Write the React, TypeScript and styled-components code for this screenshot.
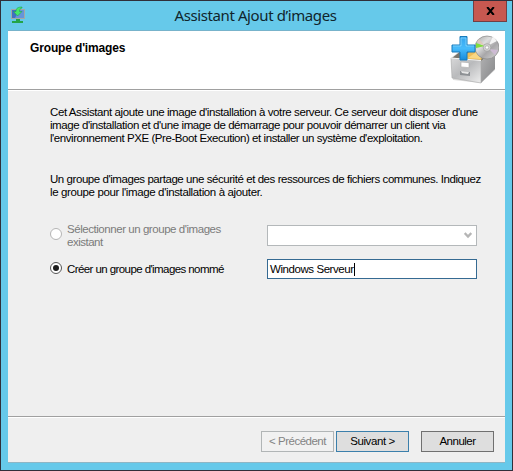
import React from 'react';
import styled, { createGlobalStyle } from 'styled-components';

const GlobalStyle = createGlobalStyle`
  * { box-sizing: border-box; }
  body { margin: 0; overflow: hidden; }
`;

const Window = styled.div`
  width: 513px;
  height: 471px;
  display: flex;
  flex-direction: column;
  padding: 0 7px 7px;
  border: 1px solid #302f3a;
  background: #66c9ea;
  font-family: 'Liberation Sans', Arial, sans-serif;
  font-size: 11.5px;
  line-height: 13px;
  color: #000;
`;

const TitleBar = styled.header`
  height: 29px;
  flex: none;
  display: grid;
  grid-template-columns: 33px 1fr 33px;
  margin-right: -1px;
`;

const TitleIcon = styled.svg`
  margin: 5px 0 0 2px;
`;

const Title = styled.h1`
  margin: 3px 3px 0 0;
  text-align: center;
  font: 400 15px/22px 'Noto Sans', 'Open Sans', sans-serif;
  letter-spacing: -0.4px;
  color: #10252c;
`;

const CloseButton = styled.button`
  width: 34px;
  height: 21px;
  padding: 0;
  display: grid;
  place-items: center;
  border: 1px solid #713f44;
  border-top: 0;
  background: #c75850;
`;

const Client = styled.main`
  flex: 1;
  display: flex;
  flex-direction: column;
  border-top: 1px solid #77b3cb;
  border-bottom: 1px solid #8fb6c5;
  background: #efefef;
`;

const Banner = styled.section`
  height: 60px;
  flex: none;
  display: flex;
  justify-content: space-between;
  padding: 3px 6px 0 22px;
  background: #fff;
  border-bottom: 1px solid #fff;
  box-shadow: inset 0 -1px #a0a0a0;
`;

const Heading = styled.h2`
  margin: 8px 0 0;
  font-size: 12px;
  line-height: 13px;
  font-weight: 700;
  letter-spacing: -0.15px;
`;

const Body = styled.section`
  height: 325px;
  flex: none;
  padding: 15px 27px 0 42px;
`;

const Paragraph = styled.p<{ $gap: number }>`
  margin: 0 0 ${p => p.$gap}px;
`;

const Line = styled.span<{ $track?: number }>`
  display: block;
  white-space: nowrap;
  letter-spacing: ${p => p.$track ?? 0}px;
`;

const OptionRow = styled.div<{ $height: number }>`
  height: ${p => p.$height}px;
  display: grid;
  grid-template-columns: 17px 200px 210px;
  align-items: start;
`;

const Radio = styled.span<{ $checked?: boolean; $top: number }>`
  width: 12px;
  height: 12px;
  margin-top: ${p => p.$top}px;
  display: grid;
  place-items: center;
  border: 1px solid ${p => (p.$checked ? '#555' : '#b5b5b5')};
  border-radius: 50%;
  background: #fff;
  &::after {
    content: '';
    width: 6px;
    height: 6px;
    border-radius: 50%;
    background: ${p => (p.$checked ? '#1c1c1c' : 'transparent')};
  }
`;

const OptionLabel = styled.label<{ $disabled?: boolean; $top: number }>`
  margin-top: ${p => p.$top}px;
  color: ${p => (p.$disabled ? '#7b7b7b' : '#000')};
`;

const Combo = styled.div`
  height: 21px;
  display: flex;
  justify-content: flex-end;
  align-items: center;
  padding: 0 4px;
  border: 1px solid #b4b8ba;
  background: #fff;
`;

const Field = styled.div`
  height: 20px;
  display: flex;
  align-items: center;
  padding: 0 2px;
  border: 1px solid #356a92;
  background: #fff;
`;

const Caret = styled.span`
  width: 1px;
  height: 13px;
  background: #000;
`;

const Footer = styled.footer`
  flex: 1;
  display: flex;
  padding: 14px 11px 0 0;
  justify-content: flex-end;
  border-top: 1px solid #a0a0a0;
  box-shadow: inset 0 1px #fff;
`;

const Button = styled.button<{ $kind: 'disabled' | 'primary' | 'plain' }>`
  width: 73px;
  height: 21px;
  padding: 0;
  margin-left: ${p => (p.$kind === 'plain' ? 12 : 2)}px;
  display: flex;
  justify-content: center;
  align-items: center;
  font: inherit;
  color: ${p => (p.$kind === 'disabled' ? '#838383' : '#000')};
  background: ${p => (p.$kind === 'disabled' ? '#f1f1f1' : '#dedede')};
  border: 1px solid ${p => ({ disabled: '#b1b5b6', primary: '#3b7fab', plain: '#707070' })[p.$kind]};
`;

const InstallIcon = () => (
  <TitleIcon width="16" height="18" viewBox="0 0 16 18">
    <path d="M1 3h14v10H1z" fill="#a3a9a4" />
    <path d="M2 4h12v8H2z" fill="#416fc1" />
    <path d="M9 4h5v8H5z" fill="#6594da" />
    <path d="M6 13h4v2h3v2H2v-2h4z" fill="#23a448" />
    <path d="M12 1C8 1 6 2 6 5.5H3.5l4 4.5L12 5.5H9.5C9.500 3.500 10 2.500 12 2z" fill="#45e66c" stroke="#189647" strokeWidth=".5" />
  </TitleIcon>
);

const ArchiveIcon = () => (
  <svg width="52" height="52" viewBox="0 0 52 52">
    <defs>
      <linearGradient id="front" x1="0" y1="0" x2="1" y2="1">
        <stop offset="0" stopColor="#d8d8d9" />
        <stop offset=".45" stopColor="#b9babc" />
        <stop offset="1" stopColor="#eeeeee" />
      </linearGradient>
      <linearGradient id="side" x1="0" y1="0" x2="1" y2="1">
        <stop offset="0" stopColor="#b3b3b4" />
        <stop offset="1" stopColor="#858688" />
      </linearGradient>
      <linearGradient id="plus" x1="0" y1="0" x2="0" y2="1">
        <stop offset="0" stopColor="#35a4ee" />
        <stop offset=".5" stopColor="#47bbfb" />
        <stop offset="1" stopColor="#168bdd" />
      </linearGradient>
      <linearGradient id="disc" x1="0" y1="0" x2="1" y2="1">
        <stop offset="0" stopColor="#a2a4a3" />
        <stop offset=".35" stopColor="#dedede" />
        <stop offset=".6" stopColor="#a8a7a9" />
        <stop offset="1" stopColor="#d8d8d8" />
      </linearGradient>
    </defs>
    <path d="M4 24 14 16h34v20L34 49 6 46z" fill="#dddddd" />
    <path d="M5 24 14 17h30l-9 10z" fill="#77746c" />
    <path d="M14 25 23 17h15l-4 9z" fill="#edbd59" />
    <path d="m21 24 7-5h9l-4 6z" fill="#f9d783" />
    <path d="m34 27 14-11v19L34 49z" fill="url(#side)" />
    <path d="m4 24 30 2.5V49L5 44z" fill="url(#front)" stroke="#aaa" strokeWidth=".6" />
    <path d="m4 24 30 2.5" stroke="#f7f7f7" />
    <path d="m14 28 8 .7v5l-8-.8z" fill="#fff" stroke="#aaa" strokeWidth=".6" />
    <path d="m13 37 10 1v4l-10-1z" fill="#8d9094" />
    <path d="m14 37 8 1-1 2-6-1z" fill="#e7e7e7" />
    <ellipse cx="40" cy="13.5" rx="12" ry="11.5" fill="url(#disc)" stroke="#888" strokeWidth=".7" />
    <path d="m29 9 9 3-9 2z" fill="#82de3e" />
    <path d="m32 5 6 7-8-4z" fill="#dfc8bd" />
    <path d="m42 15 9 1-3 5z" fill="#cdbbd4" />
    <path d="m42 11 4-9 4 5z" fill="#f4f4f4" />
    <circle cx="40" cy="13.5" r="3.8" fill="#d2d2d2" stroke="#999" strokeWidth=".6" />
    <circle cx="40" cy="13.5" r="1.7" fill="#fff" stroke="#888" strokeWidth=".5" />
    <path d="M13 2.500h7V11h8v7h-8v8h-7v-8H5v-7h8z" fill="url(#plus)" stroke="#197bbb" />
    <path d="M14 4h5v8h8M14 4v8H6" fill="none" stroke="#86d4fb" strokeWidth=".8" />
  </svg>
);

export default function App() {
  return (
    <>
      <GlobalStyle />
      <Window>
        <TitleBar>
          <InstallIcon />
          <Title>Assistant Ajout d’images</Title>
          <CloseButton aria-label="Fermer">
            <svg width="9" height="8" viewBox="0 0 9 8">
              <path d="M1.2 0 7.8 8M7.8 0 1.2 8" stroke="#000" strokeWidth="2" />
            </svg>
          </CloseButton>
        </TitleBar>
        <Client>
          <Banner>
            <Heading>Groupe d'images</Heading>
            <ArchiveIcon />
          </Banner>
          <Body>
            <Paragraph $gap={28}>
              <Line $track={-0.41}>Cet Assistant ajoute une image d'installation à votre serveur. Ce serveur doit disposer d'une</Line>
              <Line $track={-0.43}>image d'installation et d'une image de démarrage pour pouvoir démarrer un client via</Line>
              <Line $track={-0.44}>l'environnement PXE (Pre-Boot Execution) et installer un système d'exploitation.</Line>
            </Paragraph>
            <Paragraph $gap={26}>
              <Line $track={-0.44}>Un groupe d'images partage une sécurité et des ressources de fichiers communes. Indiquez</Line>
              <Line $track={-0.37}>le groupe pour l'image d'installation à ajouter.</Line>
            </Paragraph>
            <OptionRow $height={34}>
              <Radio $top={3} />
              <OptionLabel $disabled $top={-2}>
                <Line $track={-0.45}>Sélectionner un groupe d'images</Line>
                <Line $track={-0.5}>existant</Line>
              </OptionLabel>
              <Combo>
                <svg width="8" height="7" viewBox="0 0 8 7">
                  <path d="m.7 1 3.3 3.5L7.3 1" fill="none" stroke="#b5b5b5" strokeWidth="2.3" />
                </svg>
              </Combo>
            </OptionRow>
            <OptionRow $height={20}>
              <Radio $checked $top={3} />
              <OptionLabel $top={4}>
                <Line $track={-0.58}>Créer un groupe d'images nommé</Line>
              </OptionLabel>
              <Field>
                <Line $track={-0.43}>Windows Serveur</Line>
                <Caret />
              </Field>
            </OptionRow>
          </Body>
          <Footer>
            <Button $kind="disabled" disabled><Line $track={-0.5}>&lt; Précédent</Line></Button>
            <Button $kind="primary"><Line $track={-0.4}>Suivant &gt;</Line></Button>
            <Button $kind="plain"><Line $track={-0.5}>Annuler</Line></Button>
          </Footer>
        </Client>
      </Window>
    </>
  );
}
